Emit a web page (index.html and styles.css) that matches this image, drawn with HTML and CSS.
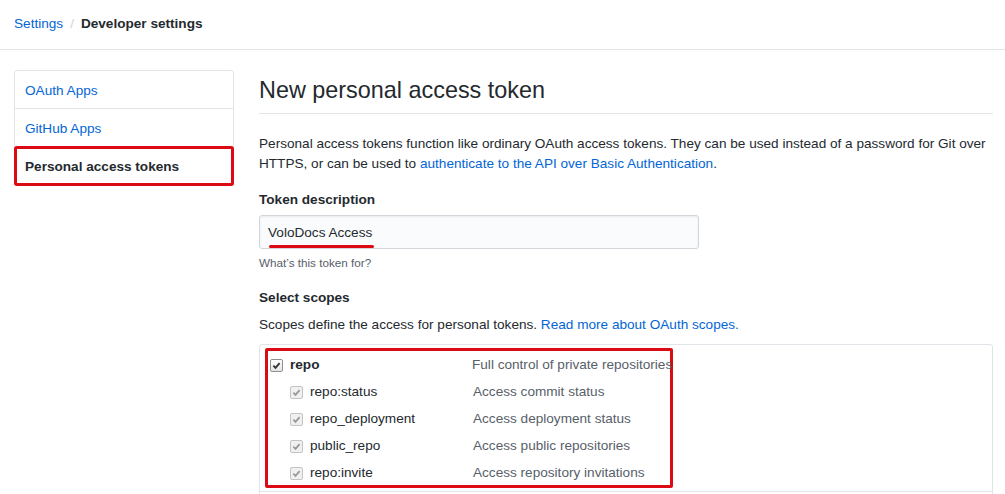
FILE: index.html
```html
<!DOCTYPE html>
<html lang="en">
<head>
<meta charset="utf-8">
<title>New personal access token</title>
<link rel="stylesheet" href="styles.css">
</head>
<body>
<header class="crumbs">
  <a class="crumb-link" href="#">Settings</a>
  <span class="crumb-sep">/</span>
  <strong class="crumb-current">Developer settings</strong>
</header>
<div class="layout">
  <nav class="side">
    <a class="side-item" href="#">OAuth Apps</a>
    <a class="side-item" href="#">GitHub Apps</a>
    <a class="side-item side-item--selected" href="#">Personal access tokens</a>
  </nav>
  <main class="main">
    <h2 class="title">New personal access token</h2>
    <p class="intro">Personal access tokens function like ordinary OAuth access tokens. They can be used instead of a password for Git over HTTPS, or can be used to <a href="#">authenticate to the API over Basic Authentication</a>.</p>
    <label class="field-label">Token description</label>
    <div class="input">
      <span class="input-text">VoloDocs Access</span>
      <span class="underline"></span>
    </div>
    <p class="note">What’s this token for?</p>
    <div class="field-label scopes-label">Select scopes</div>
    <p class="scopes-desc">Scopes define the access for personal tokens. <a href="#">Read more about OAuth scopes.</a></p>
    <div class="scopes">
      <div class="scope-group">
        <div class="highlight">
          <div class="scope-row">
            <span class="check"><svg viewBox="0 0 12 12" width="12" height="12"><path d="M2.6 6.2 L4.9 8.5 L9.4 3.4" fill="none" stroke="#333" stroke-width="2"/></svg></span>
            <span class="scope-name scope-name--main">repo</span>
            <span class="scope-desc">Full control of private repositories</span>
          </div>
          <div class="scope-row scope-row--sub">
            <span class="check check--off"><svg viewBox="0 0 12 12" width="12" height="12"><path d="M2.6 6.2 L4.9 8.5 L9.4 3.4" fill="none" stroke="#9a9a9a" stroke-width="2"/></svg></span>
            <span class="scope-name">repo:status</span>
            <span class="scope-desc">Access commit status</span>
          </div>
          <div class="scope-row scope-row--sub">
            <span class="check check--off"><svg viewBox="0 0 12 12" width="12" height="12"><path d="M2.6 6.2 L4.9 8.5 L9.4 3.4" fill="none" stroke="#9a9a9a" stroke-width="2"/></svg></span>
            <span class="scope-name">repo_deployment</span>
            <span class="scope-desc">Access deployment status</span>
          </div>
          <div class="scope-row scope-row--sub">
            <span class="check check--off"><svg viewBox="0 0 12 12" width="12" height="12"><path d="M2.6 6.2 L4.9 8.5 L9.4 3.4" fill="none" stroke="#9a9a9a" stroke-width="2"/></svg></span>
            <span class="scope-name">public_repo</span>
            <span class="scope-desc">Access public repositories</span>
          </div>
          <div class="scope-row scope-row--sub">
            <span class="check check--off"><svg viewBox="0 0 12 12" width="12" height="12"><path d="M2.6 6.2 L4.9 8.5 L9.4 3.4" fill="none" stroke="#9a9a9a" stroke-width="2"/></svg></span>
            <span class="scope-name">repo:invite</span>
            <span class="scope-desc">Access repository invitations</span>
          </div>
        </div>
      </div>
      <div class="scope-group scope-group--next"></div>
    </div>
  </main>
</div>
</body>
</html>
```
FILE: styles.css
```css
* { box-sizing: border-box; }
html, body { margin: 0; background: #fff; }
body {
  font-family: "Liberation Sans", Arial, sans-serif;
  font-size: 13.6px;
  line-height: 20px;
  color: #24292e;
  overflow: hidden;
  height: 494px;
}
a { color: #0366d6; text-decoration: none; }

.crumbs {
  height: 50px;
  border-bottom: 1px solid #e1e4e8;
  padding: 14px 14px 0;
  display: flex;
  align-items: baseline;
  gap: 7px;
}
.crumb-sep { color: #d1d5da; }
.crumb-current { font-weight: 600; }

.layout {
  display: flex;
  gap: 25px;
  padding: 20px 12px 0 14px;
}
.side {
  width: 220px;
  flex: none;
  display: flex;
  flex-direction: column;
  border: 1px solid #e1e4e8;
  border-radius: 3px;
  align-self: flex-start;
}
.side-item {
  display: block;
  padding: 10px 10px 7px;
  border-bottom: 1px solid #e1e4e8;
  line-height: 20px;
}
.side-item:last-child { border-bottom: 0; padding-bottom: 8px; }
.side-item--selected {
  color: #24292e;
  font-weight: 600;
  outline: 3px solid #dc0a14;
  outline-offset: -2px;
  border-radius: 2px;
}

.main { flex: 1; min-width: 0; }
.title {
  margin: 0;
  padding: 2px 0 5px;
  font-size: 23.4px;
  line-height: 36px;
  font-weight: 400;
  border-bottom: 1px solid #e1e4e8;
}
.intro { margin: 20px 0 0; }
.field-label { display: block; margin-top: 16px; font-weight: 600; }
.input {
  position: relative;
  margin-top: 5px;
  width: 440px;
  height: 34px;
  padding: 7px 8px;
  background: #fafbfc;
  border: 1px solid #d1d5da;
  border-radius: 3px;
  box-shadow: inset 0 1px 2px rgba(27,31,35,0.075);
}
.underline {
  position: absolute;
  left: 9px;
  width: 105px;
  top: 29px;
  height: 3px;
  border-radius: 2px;
  background: #dc0a14;
}
.note { margin: 5px 0 0; font-size: 11.7px; line-height: 18px; color: #586069; }
.scopes-label { margin-top: 16px; }
.scopes-desc { margin: 7px 0 0; }

.scopes {
  margin-top: 9px;
  border: 1px solid #e1e4e8;
  border-radius: 3px;
}
.scope-group {
  padding: 3px 5px 3px;
  border-bottom: 1px solid #e1e4e8;
}
.scope-group--next { height: 20px; border-bottom: 0; }
.highlight {
  width: 408px;
  border: 3px solid #dc0a14;
  border-radius: 2px;
}
.scope-row {
  display: flex;
  align-items: center;
  height: 27px;
  padding-left: 2px;
  padding-top: 1px;
}
.scope-row:last-child { height: 26px; padding-top: 2px; padding-bottom: 0; }
.scope-row--sub { padding-left: 22px; }
.check {
  width: 13px;
  height: 13px;
  flex: none;
  border: 1px solid #8f8f8f;
  border-radius: 2px;
  background: linear-gradient(#fff, #e4e4e4);
  display: flex;
  align-items: center;
  justify-content: center;
  margin-right: 7px;
}
.check svg { width: 11px; height: 11px; }
.check--off { border-color: #c4c4c4; background: #f0f0f0; }
.scope-name { width: 182px; flex: none; }
.scope-name--main { font-weight: 600; }
.scope-row--sub .scope-name { width: 163px; }
.scope-desc { color: #586069; white-space: nowrap; }
```
